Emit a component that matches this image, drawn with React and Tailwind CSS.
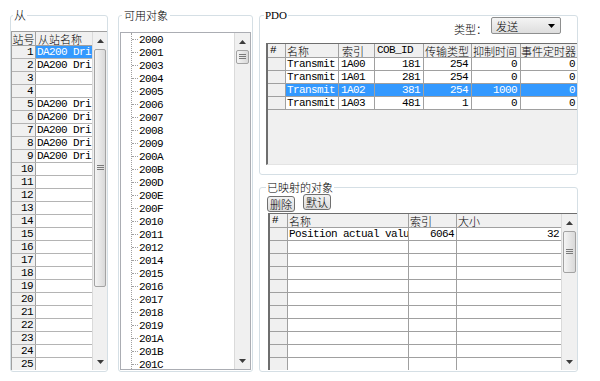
import React from "react";

const mono = "font-['Liberation_Mono',monospace] text-[11px] tracking-[-0.6px]";
const cjk = "font-['Noto_Sans_CJK_SC',sans-serif] font-light";
const groupBox = "border border-[#d5dfe5] rounded-[3px] min-w-0";

const Arrow = ({ down }) => (
  <svg width="7" height="4" viewBox="0 0 7 4">
    <polygon points={down ? "0,0 7,0 3.5,4" : "0,4 7,4 3.5,0"} fill="#3c3c3c" />
  </svg>
);

const Grip = () => (
  <svg width="7" height="6" viewBox="0 0 7 6">
    <path d="M0 0.5H7M0 2.5H7M0 4.5H7" stroke="#7a7a7a" strokeWidth="1" />
  </svg>
);

// vertical scrollbar; thumb size is passed as a full class string
const ScrollBar = ({ thumb, width = "w-[15px]" }) => (
  <div className={`${width} h-full flex flex-col bg-[#f0f0f0] border-l border-[#dadada]`}>
    <div className="h-[17px] flex items-center justify-center">
      <Arrow />
    </div>
    <div className="flex-1 flex flex-col">
      <div
        className={`${thumb} mx-[1px] rounded-[2px] border border-[#a3a3a3] bg-linear-to-r from-[#f4f4f4] to-[#d9d9d9] flex items-center justify-center`}
      >
        <Grip />
      </div>
    </div>
    <div className="h-[16px] flex items-center justify-center">
      <Arrow down />
    </div>
  </div>
);

const slaves = Array.from({ length: 25 }, (_, i) => ({
  no: i + 1,
  name: [1, 2, 5, 6, 7, 8, 9].includes(i + 1) ? "DA200 Dri" : "",
}));

const SlaveGroup = () => (
  <fieldset className={`ml-[10px] mt-[8px] w-[98px] h-[364px] ${groupBox}`}>
    <legend className={`ml-[2px] px-[1px] text-[12px] leading-[14px] ${cjk}`}>从</legend>
    <div className="mt-[9px] h-[339px] flex border-t border-l border-[#a0a0a0]">
      <div className="flex-1 min-w-0 overflow-hidden">
        <div className={`flex items-center h-[14px] border-b border-[#a0a0a0] bg-[#f0f0f0] text-[11px] leading-[12px] ${cjk}`}>
          <div className="w-[24px] h-full flex items-center justify-center border-r border-[#a0a0a0]">站号</div>
          <div className="flex-1 pl-[2px] whitespace-nowrap">从站名称</div>
        </div>
        {slaves.map((r) => (
          <div key={r.no} className={`flex h-[13px] border-b border-[#b4b4b4] leading-[12px] ${mono}`}>
            <div className="w-[24px] border-r border-[#a0a0a0] bg-[#f0f0f0] text-right pr-[2px]">{r.no}</div>
            <div
              className={`flex-1 pl-[1px] whitespace-nowrap overflow-hidden ${
                r.no === 1 ? "bg-[#3399ff] text-white" : "bg-white"
              }`}
            >
              {r.name}
            </div>
          </div>
        ))}
      </div>
      <ScrollBar thumb="h-[238px]" />
    </div>
  </fieldset>
);

const objects = [
  "2000", "2001", "2003", "2004", "2005", "2006", "2007", "2008", "2009",
  "200A", "200B", "200D", "200E", "200F", "2010", "2011", "2012", "2014",
  "2015", "2016", "2017", "2018", "2019", "201A", "201B", "201C",
];

const ObjectsGroup = () => (
  <fieldset className={`ml-[10px] mt-[8px] w-[135px] h-[364px] ${groupBox}`}>
    <legend className={`ml-[3px] px-[2px] text-[11px] leading-[14px] ${cjk}`}>可用对象</legend>
    <div className="mt-[10px] mx-[1px] h-[338px] border border-[#abadb3] flex">
      <div className="flex-1 overflow-hidden bg-white">
        <div className="ml-[10px] border-l border-dotted border-[#a0a0a0]">
          {objects.map((t) => (
            <div key={t} className="flex items-center h-[13px]">
              <div className="w-[6px] border-t border-dotted border-[#a0a0a0]" />
              <span className={`ml-[1px] leading-[12px] ${mono}`}>{t}</span>
            </div>
          ))}
        </div>
      </div>
      <ScrollBar thumb="h-[14px]" width="w-[16px]" />
    </div>
  </fieldset>
);

const pdoRows = [
  ["Transmit", "1A00", "181", "254", "0", "0"],
  ["Transmit", "1A01", "281", "254", "0", "0"],
  ["Transmit", "1A02", "381", "254", "1000", "0"],
  ["Transmit", "1A03", "481", "1", "0", "0"],
];

const PdoGroup = () => (
  <fieldset className={`mt-[8px] w-[319px] h-[167px] ${groupBox}`}>
    <legend className="ml-[4px] px-[1px] font-['Liberation_Serif',serif] font-normal text-[11px] leading-[14px]">PDO</legend>
    <div className="-mt-[5px] flex justify-end items-start pr-[16px]">
      <span className={`mt-[5px] mr-[4px] text-[11px] leading-[14px] ${cjk}`}>类型：</span>
      <div className="w-[70px] h-[17px] border border-[#8e8f8f] rounded-[2px] bg-linear-to-b from-[#f4f4f4] to-[#dedede] flex items-center pl-[4px] pr-[5px]">
        <span className={`text-[11px] leading-[14px] ${cjk}`}>发送</span>
        <span className="ml-auto flex">
          <svg width="7" height="4" viewBox="0 0 7 4">
            <polygon points="0,0 7,0 3.5,4" fill="#000" />
          </svg>
        </span>
      </div>
    </div>
    <div className="mt-[7px] ml-[6px] h-[122px] bg-[#f0f0f0] border-l-2 border-t border-[#6e6e6e] border-b border-b-[#e4e4e4]">
      <div className="flex items-center h-[14px] border-b border-[#a0a0a0] bg-[#f0f0f0] text-[11px] leading-[12px] whitespace-nowrap">
        <div className={`w-[18px] h-full border-r border-[#a0a0a0] pl-[2px] ${mono}`}>#</div>
        <div className={`w-[53px] h-full flex items-center border-r border-[#a0a0a0] pl-[1px] ${cjk}`}>名称</div>
        <div className={`w-[36px] h-full flex items-center border-r border-[#a0a0a0] pl-[3px] ${cjk}`}>索引</div>
        <div className={`w-[49px] h-full border-r border-[#a0a0a0] pl-[2px] ${mono}`}>COB_ID</div>
        <div className={`w-[48px] h-full flex items-center border-r border-[#a0a0a0] pl-[1px] ${cjk}`}>传输类型</div>
        <div className={`w-[49px] h-full flex items-center border-r border-[#a0a0a0] pl-[1px] ${cjk}`}>抑制时间</div>
        <div className={`flex-1 h-full flex items-center ${cjk}`}>事件定时器</div>
      </div>
      {pdoRows.map((r, i) => {
        const sel = i === 2 ? "bg-[#3399ff] text-white" : "bg-white";
        return (
          <div key={r[1]} className={`flex h-[13px] border-b border-[#a0a0a0] leading-[12px] whitespace-nowrap ${mono}`}>
            <div className="w-[18px] border-r border-[#a0a0a0] bg-[#f0f0f0]" />
            <div className={`w-[53px] border-r border-[#a0a0a0] pl-[1px] ${sel}`}>{r[0]}</div>
            <div className={`w-[36px] border-r border-[#a0a0a0] pl-[2px] ${sel}`}>{r[1]}</div>
            <div className={`w-[49px] border-r border-[#a0a0a0] text-right pr-[3px] ${sel}`}>{r[2]}</div>
            <div className={`w-[48px] border-r border-[#a0a0a0] text-right pr-[3px] ${sel}`}>{r[3]}</div>
            <div className={`w-[49px] border-r border-[#a0a0a0] text-right pr-[3px] ${sel}`}>{r[4]}</div>
            <div className={`flex-1 text-right pr-[2px] ${sel}`}>{r[5]}</div>
          </div>
        );
      })}
    </div>
  </fieldset>
);

const mapped = Array.from({ length: 11 }, (_, i) =>
  i === 0 ? ["Position actual valu", "6064", "32"] : ["", "", ""]
);

const btn =
  "w-[28px] h-[16px] border border-[#707070] rounded-[3px] bg-linear-to-b from-[#f3f3f3] to-[#dcdcdc] text-[11px] leading-[14px] flex items-center justify-center";

const MappedGroup = () => (
  <fieldset className={`mt-[5px] w-[319px] h-[192px] ${groupBox}`}>
    <legend className={`ml-[6px] px-[1px] text-[11px] leading-[14px] ${cjk}`}>已映射的对象</legend>
    <div className={`flex items-start ml-[7px] gap-[8px] h-[18px] ${cjk}`}>
      <button className={`mt-[2px] ${btn}`}>删除</button>
      <button className={btn}>默认</button>
    </div>
    <div className="mt-[1px] ml-[8px] h-[157px] flex border-l-2 border-t border-[#6e6e6e]">
      <div className="flex-1 min-w-0 overflow-hidden">
        <div className="flex items-center h-[14px] border-b border-[#a0a0a0] bg-[#f0f0f0] text-[11px] leading-[12px]">
          <div className={`w-[18px] h-full border-r border-[#a0a0a0] pl-[2px] ${mono}`}>#</div>
          <div className={`w-[121px] h-full flex items-center border-r border-[#a0a0a0] pl-[1px] ${cjk}`}>名称</div>
          <div className={`w-[48px] h-full flex items-center border-r border-[#a0a0a0] pl-[1px] ${cjk}`}>索引</div>
          <div className={`flex-1 h-full flex items-center pl-[1px] ${cjk}`}>大小</div>
        </div>
        {mapped.map((r, i) => (
          <div key={i} className={`flex h-[13px] border-b border-[#a0a0a0] leading-[12px] whitespace-nowrap ${mono}`}>
            <div className="w-[18px] border-r border-[#a0a0a0] bg-[#f0f0f0]" />
            <div className="w-[121px] border-r border-[#a0a0a0] pl-[1px] overflow-hidden bg-white">{r[0]}</div>
            <div className="w-[48px] border-r border-[#a0a0a0] text-right pr-[2px] bg-white">{r[1]}</div>
            <div className="flex-1 text-right pr-[2px] bg-white">{r[2]}</div>
          </div>
        ))}
      </div>
      <ScrollBar thumb="h-[42px]" width="w-[16px]" />
    </div>
  </fieldset>
);

export default function App() {
  return (
    <div className="w-[600px] h-[381px] bg-white text-black flex items-start overflow-hidden">
      <SlaveGroup />
      <ObjectsGroup />
      <div className="ml-[6px] w-[319px] flex flex-col">
        <PdoGroup />
        <MappedGroup />
      </div>
    </div>
  );
}
